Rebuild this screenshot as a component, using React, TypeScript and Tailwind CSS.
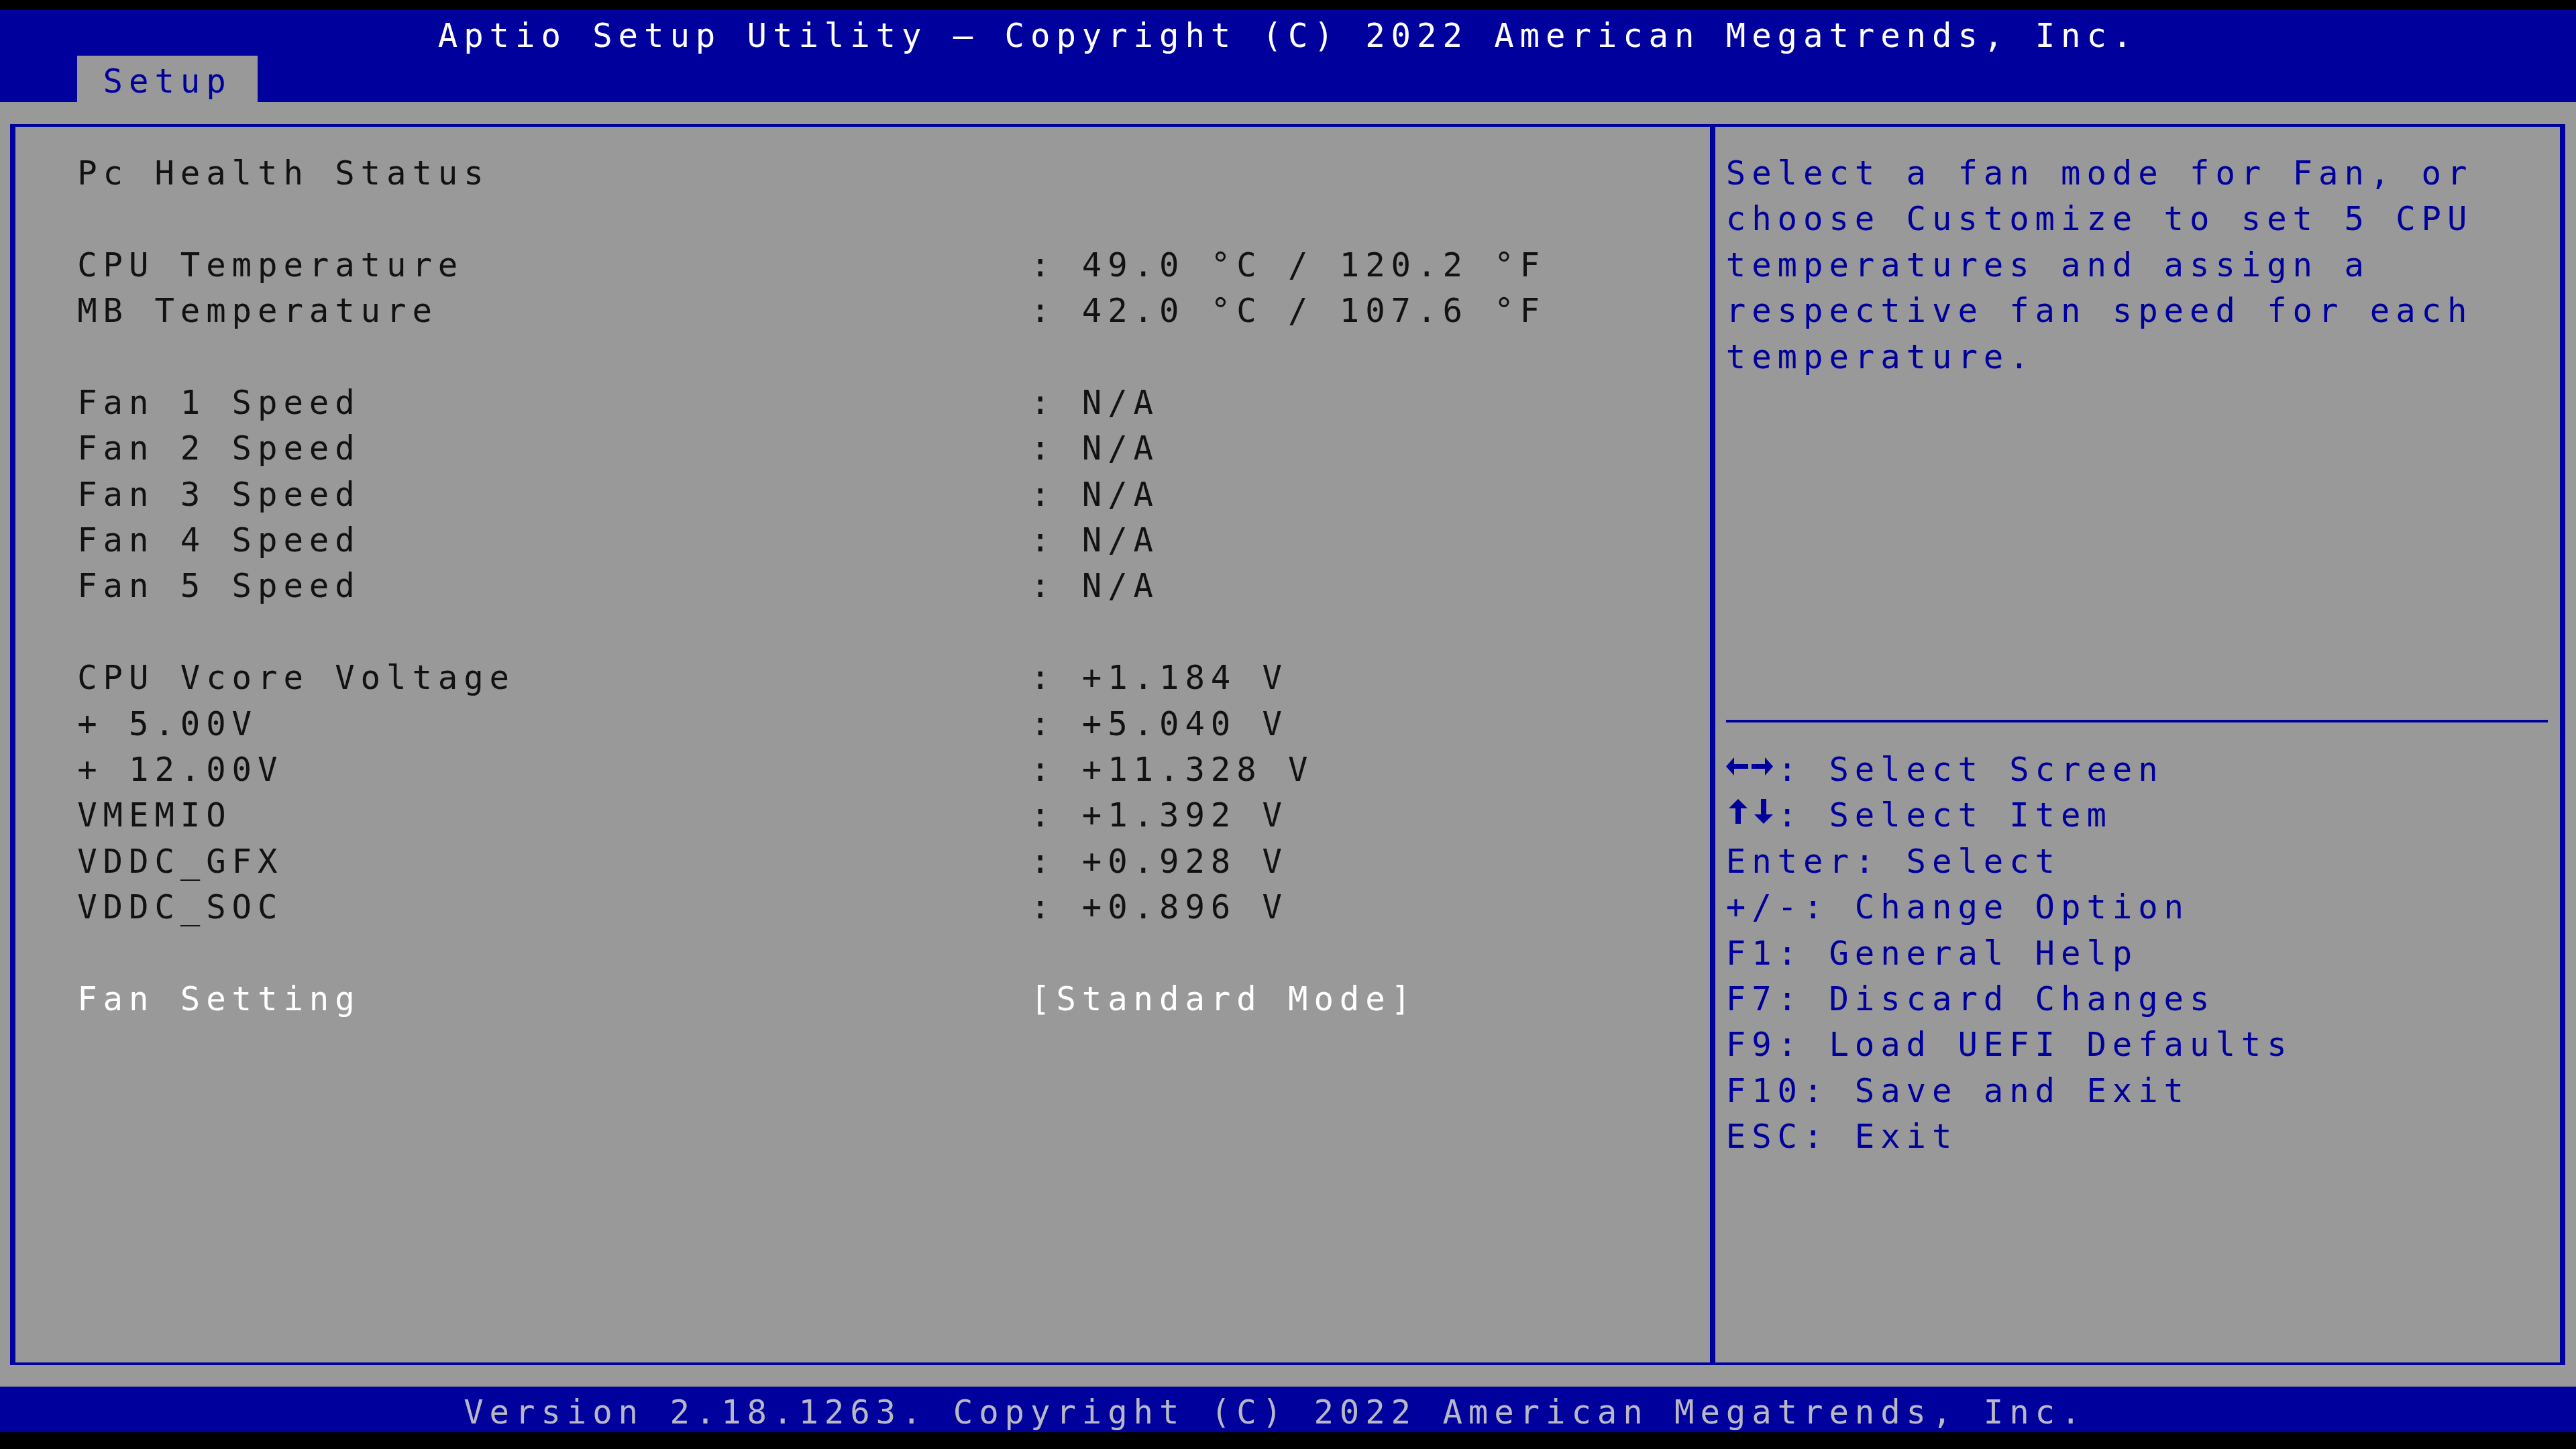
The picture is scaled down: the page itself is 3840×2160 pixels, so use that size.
const ROW = 'h-[68.4px] pt-[5px] leading-[68.4px] whitespace-pre';
const BLUE = '#00009c';

type Reading = { label: string; value?: string; active?: boolean } | null;

const readings: Reading[] = [
  { label: 'Pc Health Status' },
  null,
  { label: 'CPU Temperature', value: ': 49.0 °C / 120.2 °F' },
  { label: 'MB Temperature', value: ': 42.0 °C / 107.6 °F' },
  null,
  { label: 'Fan 1 Speed', value: ': N/A' },
  { label: 'Fan 2 Speed', value: ': N/A' },
  { label: 'Fan 3 Speed', value: ': N/A' },
  { label: 'Fan 4 Speed', value: ': N/A' },
  { label: 'Fan 5 Speed', value: ': N/A' },
  null,
  { label: 'CPU Vcore Voltage', value: ': +1.184 V' },
  { label: '+ 5.00V', value: ': +5.040 V' },
  { label: '+ 12.00V', value: ': +11.328 V' },
  { label: 'VMEMIO', value: ': +1.392 V' },
  { label: 'VDDC_GFX', value: ': +0.928 V' },
  { label: 'VDDC_SOC', value: ': +0.896 V' },
  null,
  { label: 'Fan Setting', value: '[Standard Mode]', active: true },
];

const helpText = [
  'Select a fan mode for Fan, or',
  'choose Customize to set 5 CPU',
  'temperatures and assign a',
  'respective fan speed for each',
  'temperature.',
];

// two-cell wide arrow glyphs used in the key legend
function LeftRight() {
  return (
    <svg width="76.8" height="58" viewBox="0 0 76.8 58" className="inline-block align-top" fill={BLUE}>
      <polygon points="0,28.5 12,15 12,42" />
      <rect x="10" y="25" width="23" height="7" />
      <rect x="38" y="25" width="22" height="7" />
      <polygon points="70,28.5 58,15 58,42" />
    </svg>
  );
}

function UpDown() {
  return (
    <svg width="76.8" height="58" viewBox="0 0 76.8 58" className="inline-block align-top" fill={BLUE}>
      <polygon points="18,9 4,23 32,23" />
      <rect x="14" y="21" width="8" height="25" />
      <rect x="52" y="9" width="8" height="25" />
      <polygon points="56,46 42,32 70,32" />
    </svg>
  );
}

const keys: { key: React.ReactNode; desc: string }[] = [
  { key: <LeftRight />, desc: ': Select Screen' },
  { key: <UpDown />, desc: ': Select Item' },
  { key: 'Enter', desc: ': Select' },
  { key: '+/-', desc: ': Change Option' },
  { key: 'F1', desc: ': General Help' },
  { key: 'F7', desc: ': Discard Changes' },
  { key: 'F9', desc: ': Load UEFI Defaults' },
  { key: 'F10', desc: ': Save and Exit' },
  { key: 'ESC', desc: ': Exit' },
];

function ReadingRow({ item }: { item: Reading }) {
  if (!item) return <div className={ROW} />;
  return (
    <div className={`${ROW} flex ${item.active ? 'text-white' : 'text-[#121212]'}`}>
      <span className="w-[1420.8px] shrink-0">{item.label}</span>
      {item.value && <span>{item.value}</span>}
    </div>
  );
}

export default function App() {
  return (
    <div
      className="flex h-[2160px] w-[3840px] flex-col bg-black text-[49px] tracking-[8.9px]"
      style={{ fontFamily: '"DejaVu Sans Mono", "Liberation Mono", monospace' }}
    >
      <div className="h-[15px] shrink-0" />

      {/* title bar + tab strip */}
      <header className="shrink-0 bg-[#00009c]">
        <div className={`${ROW} pl-[652.8px] text-white`}>
          Aptio Setup Utility – Copyright (C) 2022 American Megatrends, Inc.
        </div>
        <div className="flex h-[68.4px] pl-[115.2px]">
          <div className={`${ROW} w-[268.8px] bg-[#999999] pl-[38.4px] text-[#00009c]`}>Setup</div>
        </div>
      </header>

      <main className="flex h-[1915.2px] shrink-0 flex-col bg-[#999999] pt-[33px] pb-[32px] pl-[15px] pr-[16px]">
        <div className="flex flex-1 border-x-[8px] border-y-[4px] border-[#00009c]">
          {/* readings */}
          <section className="w-[2534px] shrink-0 border-r-[8px] border-[#00009c] pt-[31.2px] pl-[92.2px]">
            {readings.map((r, i) => (
              <ReadingRow key={i} item={r} />
            ))}
          </section>

          {/* help + key legend */}
          <aside className="flex-1 pt-[31.2px] pl-[15.8px] text-[#00009c]">
            {helpText.map((t) => (
              <div key={t} className={ROW}>
                {t}
              </div>
            ))}
            {Array.from({ length: 7 }).map((_, i) => (
              <div key={i} className={ROW} />
            ))}
            <div className="flex h-[68.4px] items-center pr-[18px]">
              <div className="h-[4px] w-full bg-[#00009c]" />
            </div>
            {keys.map((k) => (
              <div key={k.desc} className={ROW}>
                {k.key}
                {k.desc}
              </div>
            ))}
          </aside>
        </div>
      </main>

      <footer className={`${ROW} shrink-0 bg-[#00009c] pl-[691.2px] text-[#b8b8c4]`}>
        Version 2.18.1263. Copyright (C) 2022 American Megatrends, Inc.
      </footer>
    </div>
  );
}
